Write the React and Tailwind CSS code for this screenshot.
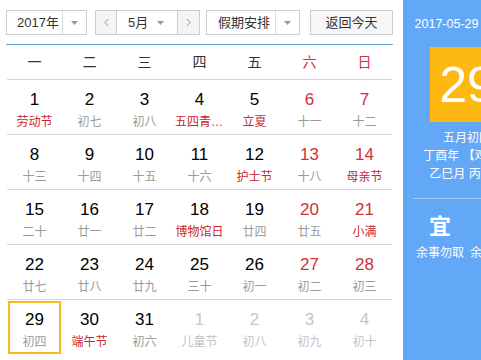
import { ChevronLeft, ChevronRight } from 'lucide-react';

const FONT = { fontFamily: '"Liberation Sans", Arial, "Noto Sans CJK SC", sans-serif' };

const weeks = ['一', '二', '三', '四', '五', '六', '日'];

// [day, label, labelIsHoliday, otherMonth]
const days = [
  [1, '劳动节', true], [2, '初七'], [3, '初八'], [4, '五四青年节', true], [5, '立夏', true], [6, '十一'], [7, '十二'],
  [8, '十三'], [9, '十四'], [10, '十五'], [11, '十六'], [12, '护士节', true], [13, '十八'], [14, '母亲节', true],
  [15, '二十'], [16, '廿一'], [17, '廿二'], [18, '博物馆日', true], [19, '廿四'], [20, '廿五'], [21, '小满', true],
  [22, '廿七'], [23, '廿八'], [24, '廿九'], [25, '三十'], [26, '初一'], [27, '初二'], [28, '初三'],
  [29, '初四'], [30, '端午节', true], [31, '初六'], [1, '儿童节', false, true], [2, '初八', false, true], [3, '初九', false, true], [4, '初十', false, true],
];

function Arrow() {
  return (
    <svg width="7" height="4" viewBox="0 0 7 4">
      <path d="M0 0h7L3.5 4z" fill="#999" />
    </svg>
  );
}

function DayCell({ day, label, holiday, other, index }) {
  const weekend = index % 7 >= 5;
  const selected = !other && day === 29;
  const lastRow = index >= 28;
  let numColor = 'text-black';
  if (weekend) numColor = 'text-[#d2303a]';
  if (other) numColor = 'text-[#c6c6c6]';
  let labelColor = 'text-[#9a9a9a]';
  if (holiday) labelColor = 'text-[#c9272f]';
  if (other) labelColor = 'text-[#c2c2c2]';

  return (
    <div className={`h-[55px] p-px ${lastRow ? '' : 'border-b border-[#d6d6d6]'}`}>
      <div
        className={`h-full flex flex-col items-center border-2 ${
          selected ? 'border-[#f7b924]' : 'border-transparent'
        }`}
      >
        <div className={`text-[17px] leading-[20px] mt-[7px] ${numColor}`}>{day}</div>
        <div className={`text-[12px] leading-[16px] mt-[4px] w-full text-center truncate ${labelColor}`}>
          {label}
        </div>
      </div>
    </div>
  );
}

export default function App() {
  return (
    <div className="w-[481px] h-[360px] overflow-hidden bg-white" style={FONT}>
      <div className="flex w-[531px] h-[360px]">
        {/* calendar */}
        <div className="w-[403px] shrink-0 pl-[6px]">
          <div className="w-[387px] h-[45px] border-b border-[#63a9e6] pt-[10px] flex items-start text-[13px] text-[#333]">
            <div className="flex h-[25px] w-[81px] border border-[#ccc] bg-white">
              <span className="flex-1 pl-[10px] leading-[23px]">2017年</span>
              <span className="w-[24px] border-l border-[#ddd] flex items-center justify-center">
                <Arrow />
              </span>
            </div>

            <div className="flex h-[25px] w-[105px] ml-[8px] border border-[#ccc] bg-white">
              <span className="w-[21px] bg-[#f4f4f4] border-r border-[#ccc] flex items-center justify-center text-[#666]">
                <ChevronLeft size={13} strokeWidth={1.3} />
              </span>
              <span className="flex-1 pl-[11px] leading-[23px]">5月</span>
              <span className="w-[20px] flex items-center justify-start">
                <Arrow />
              </span>
              <span className="w-[22px] bg-[#f4f4f4] border-l border-[#ccc] flex items-center justify-center text-[#666]">
                <ChevronRight size={13} strokeWidth={1.3} />
              </span>
            </div>

            <div className="flex h-[25px] w-[94px] ml-[6px] border border-[#ccc] bg-white">
              <span className="flex-1 pl-[11px] leading-[23px]">假期安排</span>
              <span className="w-[24px] border-l border-[#ddd] flex items-center justify-center">
                <Arrow />
              </span>
            </div>

            <div className="h-[25px] w-[83px] ml-[10px] border border-[#ccc] bg-[#f6f6f6] flex items-center justify-center">
              返回今天
            </div>
          </div>

          <div className="w-[387px] pl-px">
            <div className="grid grid-cols-7 w-[385px] h-[35px] border-b border-[#d6d6d6] items-center text-[14px]">
              {weeks.map((w, i) => (
                <div key={w} className={`text-center ${i >= 5 ? 'text-[#d2303a]' : 'text-[#333]'}`}>
                  {w}
                </div>
              ))}
            </div>
            <div className="grid grid-cols-7 w-[385px]">
              {days.map(([day, label, holiday, other], i) => (
                <DayCell key={i} index={i} day={day} label={label} holiday={holiday} other={other} />
              ))}
            </div>
          </div>
        </div>

        {/* today panel */}
        <div className="w-[128px] shrink-0 bg-[#62a8f7] text-white flex flex-col items-center px-[10px]">
          <div className="mt-[15px] text-[12.5px] leading-[18px] whitespace-nowrap">2017-05-29 星期一</div>
          <div className="mt-[14px] w-[75px] h-[75px] bg-[#fdb812] flex items-center justify-center text-[50px] leading-none">
            29
          </div>
          <div className="mt-[7px] text-[12px] leading-[18px] text-center whitespace-nowrap">
            <div>五月初四</div>
            <div>丁酉年 【鸡年】</div>
            <div>乙巳月 丙午日</div>
          </div>
          <div className="w-full h-px bg-white/40 mt-[15px]" />
          <div className="w-full grid grid-cols-2 mt-[14px]">
            <div className="flex flex-col items-center">
              <span className="text-[22px] leading-[28px] font-bold">宜</span>
              <span className="text-[12px] leading-[18px] mt-[3px] whitespace-nowrap">余事勿取</span>
            </div>
            <div className="flex flex-col items-center">
              <span className="text-[22px] leading-[28px] font-bold">忌</span>
              <span className="text-[12px] leading-[18px] mt-[3px] whitespace-nowrap">余事勿取</span>
            </div>
          </div>
        </div>
      </div>
    </div>
  );
}
